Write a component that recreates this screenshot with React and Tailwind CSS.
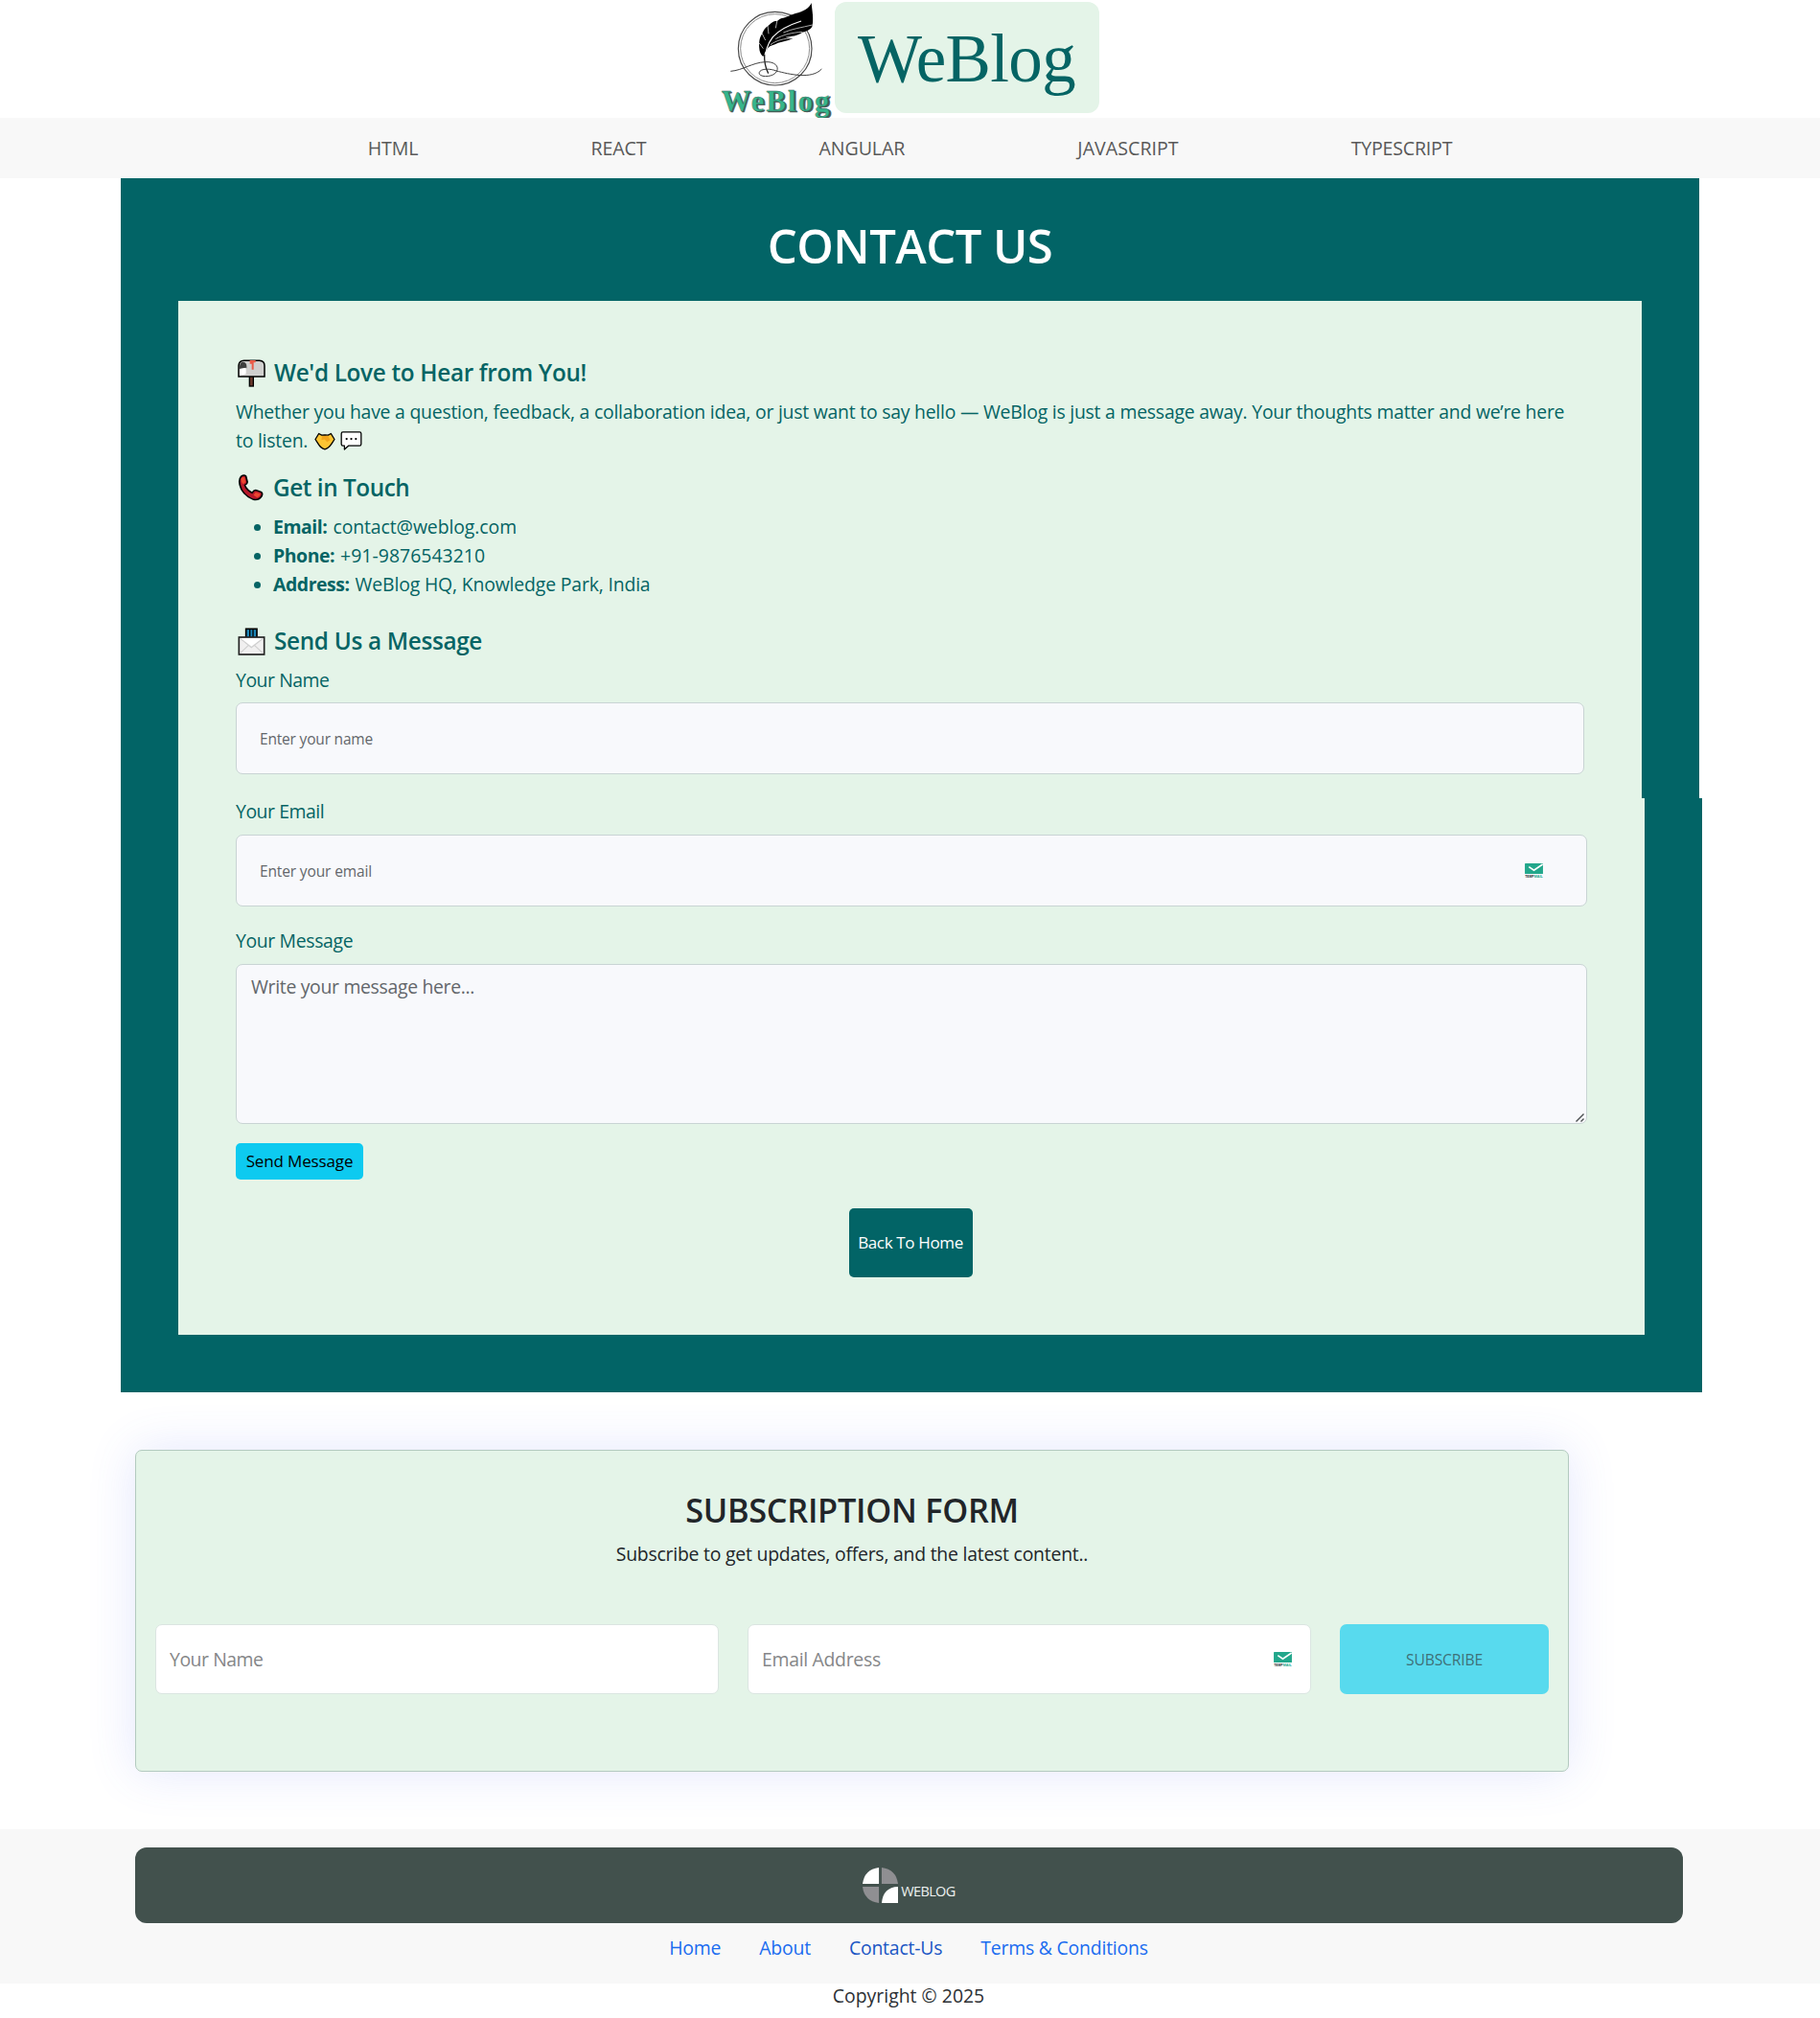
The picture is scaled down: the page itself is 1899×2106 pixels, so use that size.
import React from "react";

function QuillLogo() {
  return (
    <svg viewBox="60 0 360 369" className="h-[123px] w-[120px]" aria-label="WeBlog quill logo">
      <circle cx="236" cy="152" r="115" fill="none" stroke="#4a4a4a" strokeWidth="3.5" />
      <circle cx="236" cy="152" r="108" fill="none" stroke="#777" strokeWidth="2.5" />
      <path
        d="M350 9 C345 24 325 36 300 42 C284 46 276 53 262 56 C248 58 246 66 238 66 C224 68 220 78 210 84 C198 94 198 104 192 112 C185 126 186 142 187 152 C188 166 194 172 199 177 C204 168 206 160 214 150 C222 140 232 142 246 134 C262 130 276 128 292 120 C280 118 274 118 268 116 C288 114 306 112 322 101 C336 99 346 92 352 84 C358 60 352 34 350 9 Z"
        fill="#000"
      />
      <path d="M318 66 C280 78 248 94 229 116 C212 138 204 162 203 196" fill="none" stroke="#fff" strokeWidth="3.5" />
      <path
        d="M213 80 L216 106 M195 104 L206 126 M186 134 L199 152 M243 62 L238 88 M353 78 C320 86 290 90 262 102 M322 100 C290 102 262 108 238 122 M290 120 C266 120 240 126 222 140"
        fill="none"
        stroke="#fff"
        strokeWidth="2"
      />
      <path d="M203 170 C202 190 205 210 215 230" fill="none" stroke="#222" strokeWidth="4" />
      <path
        d="M97 223 C135 220 165 196 205 194 C235 192 250 208 241 224 C232 240 196 244 187 232 C182 216 215 212 240 222 C280 232 350 250 382 216"
        fill="none"
        stroke="#333"
        strokeWidth="2.8"
      />
      <text
        x="72"
        y="350"
        textLength="340"
        fill="#4a5a55"
        stroke="#4a5a55"
        strokeWidth="1.5"
        fontFamily="Liberation Serif, serif"
        fontWeight="700"
        fontSize="92"
        aria-hidden="true"
      >
        WeBlog
      </text>
      <text
        x="68"
        y="347"
        textLength="338"
        fill="#35b58c"
        stroke="#35665a"
        strokeWidth="1.2"
        fontFamily="Liberation Serif, serif"
        fontWeight="700"
        fontSize="92"
      >
        WeBlog
      </text>
    </svg>
  );
}

function MailboxIcon() {
  return (
    <svg viewBox="0 0 87 87" className="h-[29px] w-[29px]">
      <rect x="37" y="50" width="12" height="34" fill="#6b3a2e" stroke="#000" strokeWidth="4" />
      <path d="M3 54 V20 Q4 4 20 4 H68 Q84 5 84 20 V54 Z" fill="#d0cfce" stroke="#000" strokeWidth="4.5" />
      <path d="M6 51 V22 Q7 8 17 8 Q28 9 28 22 V28 L6 30 Z" fill="#3f3f3f" />
      <path d="M6 30 L26 26 V46 L6 51 Z" fill="#fff" />
      <path d="M38 3 H56 V10 H50 V32 H44 V14 H38 Z" fill="#ea5a47" />
    </svg>
  );
}

function PhoneIcon() {
  return (
    <svg viewBox="0 0 72 84" className="h-7 w-[27px]" preserveAspectRatio="none">
      <path
        d="M10 6 Q18 0 23 6 L27 24 Q27 30 20 34 Q24 48 40 58 Q46 48 52 50 L66 56 Q70 60 67 68 Q60 82 44 79 Q22 70 11 48 Q-1 20 10 6 Z"
        fill="#b8182a"
        stroke="#000"
        strokeWidth="4.5"
      />
      <path d="M10 12 Q15 7 19 10 L22 25 L15 31 Q8 22 10 12 Z M50 56 L63 61 Q62 70 54 73 L44 65 Z" fill="#ee4630" />
    </svg>
  );
}

function EnvelopeIcon() {
  return (
    <svg viewBox="0 0 87 87" className="h-[29px] w-[29px]">
      <rect x="26" y="4" width="34" height="32" fill="#1c86b8" stroke="#000" strokeWidth="5" />
      <path d="M38 4 V30 M48 4 V30" stroke="#000" strokeWidth="4" />
      <rect x="4" y="30" width="79" height="54" fill="#f1f0f0" stroke="#222" strokeWidth="5" />
      <path d="M8 34 L43 62 L79 34 M8 80 L33 56 M79 80 L53 56" fill="none" stroke="#cfcfcf" strokeWidth="3.5" />
      <path d="M10 33 H77 L43 58 Z" fill="#fff" />
    </svg>
  );
}

function HandsIcon() {
  return (
    <svg viewBox="0 0 66 56" className="h-[19px] w-[22px]">
      <path d="M14 4 L23 9 L33 8 L43 9 L52 4 L63 22 L54 36 Q44 51 33 53 Q20 50 12 36 L3 22 Z" fill="#fcc433" stroke="#000" strokeWidth="4" strokeLinejoin="round" />
      <path d="M24 12 L42 11 L50 24 L40 30 L32 22 L22 24 Z" fill="#f2a51c" />
    </svg>
  );
}

function BubbleIcon() {
  return (
    <svg viewBox="0 0 70 62" className="h-5 w-[23px]">
      <path d="M8 3 H62 Q67 3 67 8 V42 Q67 47 62 47 H26 L13 59 V47 H8 Q3 47 3 42 V8 Q3 3 8 3 Z" fill="#fff" stroke="#000" strokeWidth="4" strokeLinejoin="round" />
      <circle cx="20" cy="25" r="3.5" />
      <circle cx="35" cy="25" r="3.5" />
      <circle cx="50" cy="25" r="3.5" />
    </svg>
  );
}

function TempMailIcon() {
  return (
    <svg viewBox="0 0 58 46" className="h-[15px] w-[19px]">
      <rect width="58" height="34" rx="2" fill="#22a78b" />
      <path d="M13 11 L29 22 L57 3" fill="none" stroke="#fff" strokeWidth="5" />
      <text x="1" y="45" fontSize="10" fontWeight="700" textLength="28" lengthAdjust="spacingAndGlyphs" fill="#1d2b33" fontFamily="Liberation Sans, sans-serif">TEMP</text>
      <text x="30" y="45" fontSize="10" fontWeight="700" textLength="27" lengthAdjust="spacingAndGlyphs" fill="#22a78b" fontFamily="Liberation Sans, sans-serif">MAIL</text>
    </svg>
  );
}

function FooterMark() {
  return (
    <svg viewBox="0 0 38 38" className="h-[37px] w-[37px]">
      <path d="M17.5 0 V17.5 H0 Q2 2 17.5 0 Z" fill="#fff" />
      <path d="M20.5 0 V17.5 H38 Q36 2 20.5 0 Z" fill="#8f8f92" />
      <path d="M17.5 38 V20.5 H0 Q2 36 17.5 38 Z" fill="#8f8f92" />
      <path d="M38 38 V20.5 Q22 21 20.5 38 Z" fill="#fff" />
    </svg>
  );
}

const NAV = [
  ["HTML", "tracking-[-0.006em]"],
  ["REACT", "tracking-[-0.004em]"],
  ["ANGULAR", "tracking-[-0.004em]"],
  ["JAVASCRIPT", "tracking-[0.002em]"],
  ["TYPESCRIPT", "tracking-[-0.011em]"],
];

const CONTACTS = [
  ["Email:", "contact@weblog.com", "tracking-[-0.004em]"],
  ["Phone:", "+91-9876543210", "tracking-[0.002em]"],
  ["Address:", "WeBlog HQ, Knowledge Park, India", "tracking-[-0.008em]"],
];

const LINKS = [
  ["Home", "text-[#1a6cf0]"],
  ["About", "text-[#1a6cf0]"],
  ["Contact-Us", "text-[#1a56c4]"],
  ["Terms & Conditions", "text-[#1a6cf0]"],
];

const FIELD = "block w-full rounded-[7px] border border-[#c9d4d4] bg-[#f8f9fc] outline-none";

export default function App() {
  return (
    <div className="h-[2106px] w-full overflow-hidden bg-white font-['Open_Sans',sans-serif] text-[19.4px] leading-[30px] tracking-[-0.01em] text-[#212529]">
      <header className="flex h-[123px] justify-center gap-px pr-[3px]">
        <QuillLogo />
        <div className="mt-[2px] flex h-[116px] w-[276px] items-center justify-center rounded-[12px] bg-[#e4f4e8] pt-px font-['Liberation_Serif',serif] text-[71px] leading-[80px] tracking-[-0.009em] text-[#056464]">
          WeBlog
        </div>
      </header>

      <nav className="flex h-[63px] items-center justify-center gap-[180px] bg-[#f8f8f8] pt-px text-[19.6px] text-[#595959]">
        {NAV.map(([label, tracking]) => (
          <a key={label} className={tracking}>{label}</a>
        ))}
      </nav>

      <main className="ml-[126px] text-[#056464]">
        <section className="h-[647px] w-[1647px] bg-[#026466] px-[60px] pt-[38px]">
          <h1 className="h-[90px] pt-px text-center text-[49px] font-semibold leading-[62px] tracking-[-0.011em] text-white">CONTACT US</h1>
          <div className="h-[519px] bg-[#e4f4e8] px-[60px] pt-[60px]">
            <h2 className="mb-[11px] flex h-[30px] items-center text-[24.3px] font-semibold tracking-[-0.013em]">
              <span className="flex w-10 pl-[2px]"><MailboxIcon /></span>
              We'd Love to Hear from You!
            </h2>
            <p className="mb-[19px] whitespace-nowrap tracking-[-0.0117em]">
              Whether you have a question, feedback, a collaboration idea, or just want to say hello — WeBlog is just a message away. Your thoughts matter and we’re here
              <br />
              <span className="flex items-center">
                to listen.
                <span className="ml-[7px] flex items-center gap-[5px]"><HandsIcon /><BubbleIcon /></span>
              </span>
            </p>
            <h2 className="mb-[11px] flex h-[30px] items-center text-[24.3px] font-semibold tracking-[-0.018em]">
              <span className="flex w-[39px] pl-[2px]"><PhoneIcon /></span>
              Get in Touch
            </h2>
            <ul className="mb-[29px]">
              {CONTACTS.map(([label, value, tracking]) => (
                <li key={label} className="flex items-center pl-[19px]">
                  <span className="mr-[13px] h-[7px] w-[7px] rounded-full bg-[#056464]" />
                  <b className="mr-[6px] tracking-[-0.022em]">{label}</b>
                  <span className={tracking}>{value}</span>
                </li>
              ))}
            </ul>
            <h2 className="mb-[11px] flex h-[30px] items-center text-[24.3px] font-semibold tracking-[-0.013em]">
              <span className="flex w-10 pl-[2px]"><EnvelopeIcon /></span>
              Send Us a Message
            </h2>
            <label className="mb-2 block tracking-[-0.023em]">Your Name</label>
            <input className={FIELD + " h-[75px] pl-6 pt-px text-[15.5px] tracking-[-0.012em] placeholder:text-[#63676b]"} placeholder="Enter your name" />
          </div>
        </section>

        <section className="h-[620px] w-[1650px] bg-[#026466] px-[60px] pb-[60px]">
          <div className="h-[560px] bg-[#e4f4e8] px-[60px]">
            <label className="mb-[10px] block leading-7 tracking-[-0.023em]">Your Email</label>
            <div className={FIELD + " flex h-[75px] items-center pr-[45px]"}>
              <input className="min-w-0 flex-1 bg-transparent pl-6 pt-px text-[15.5px] tracking-[-0.009em] outline-none placeholder:text-[#63676b]" placeholder="Enter your email" />
              <TempMailIcon />
            </div>
            <label className="mb-[9px] mt-[21px] block tracking-[-0.018em]">Your Message</label>
            <div className="relative">
              <textarea className={FIELD + " h-[167px] resize-none px-[15px] py-2 tracking-[-0.016em] placeholder:text-[#63676b]"} placeholder="Write your message here..." />
              <svg viewBox="0 0 9 9" className="pointer-events-none absolute bottom-[2px] right-[3px] h-[9px] w-[9px]">
                <path d="M0.5 8.5 L8.5 0.5 M5.5 8.5 L8.5 5.5" stroke="#4a4d50" strokeWidth="1.4" />
              </svg>
            </div>
            <button className="mt-5 flex h-[38px] w-[133px] items-center justify-center rounded-[5px] bg-[#0dcaf0] text-[17px] leading-[26px] tracking-[-0.008em] text-black">
              Send Message
            </button>
            <div className="mt-[30px] flex justify-center pr-[2px]">
              <button className="flex h-[72px] w-[129px] items-center justify-center rounded-[5px] bg-[#026466] text-[17px] leading-[26px] tracking-[-0.021em] text-white">
                Back To Home
              </button>
            </div>
          </div>
        </section>
      </main>

      <section className="ml-[141px] mt-[60px] h-[336px] w-[1496px] rounded-[7px] border border-[#b3cabf] bg-[#e4f4e8] px-5 pt-[41px] text-center shadow-[0_0_50px_rgba(80,100,240,0.16)]">
        <h2 className="mb-[10px] text-[34.3px] font-semibold leading-[42px] tracking-[-0.008em]">SUBSCRIPTION FORM</h2>
        <p className="tracking-[-0.0115em]">Subscribe to get updates, offers, and the latest content..</p>
        <form className="mt-[58px] flex h-[73px] gap-[30px]">
          <input className="w-[588px] rounded-[7px] border border-[#dbe5e1] bg-white pl-[14px] tracking-[-0.023em] outline-none placeholder:text-[#858688]" placeholder="Your Name" />
          <div className="flex w-[588px] items-center rounded-[7px] border border-[#dbe5e1] bg-white pr-[19px]">
            <input className="min-w-0 flex-1 pl-[14px] tracking-[-0.015em] outline-none placeholder:text-[#858688]" placeholder="Email Address" />
            <TempMailIcon />
          </div>
          <button type="button" className="w-[218px] rounded-[7px] bg-[#58daee] text-[15.7px] tracking-[-0.012em] text-[#3f7178]">SUBSCRIBE</button>
        </form>
      </section>

      <footer className="mt-[60px] h-[161px] bg-[#f8f8f8] pt-[19px]">
        <div className="ml-[141px] flex h-[79px] w-[1615px] items-center justify-center rounded-[12px] bg-[#42514d]">
          <FooterMark />
          <span className="ml-[3px] mt-[13px] text-[14.5px] leading-5 tracking-[-0.045em] text-[#eef2f1]">WEBLOG</span>
        </div>
        <div className="flex justify-center gap-10 pr-[3px] pt-[11px]">
          {LINKS.map(([label, color]) => (
            <a key={label} className={color}>{label}</a>
          ))}
        </div>
      </footer>
      <p className="pr-[3px] text-center leading-[26px] tracking-[0.001em] text-[#2c3034]">Copyright © 2025</p>
    </div>
  );
}
